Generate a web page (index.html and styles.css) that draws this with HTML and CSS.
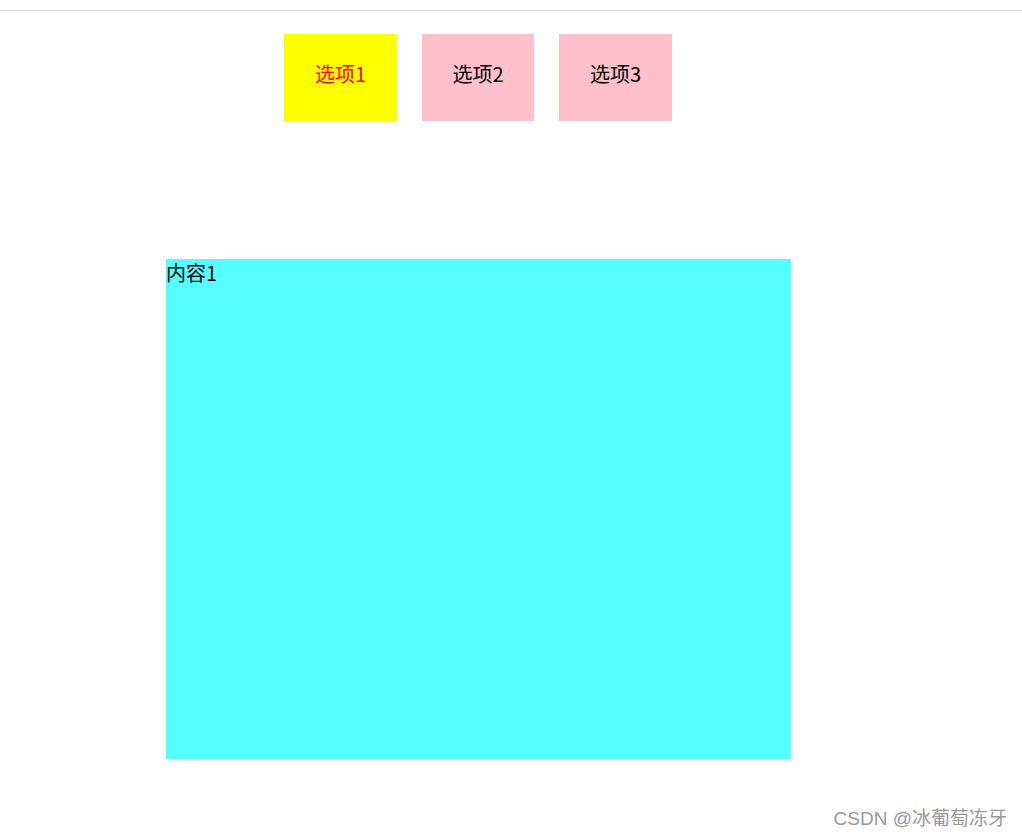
FILE: index.html
```html
<!DOCTYPE html>
<html lang="zh">
<head>
  <meta charset="UTF-8" />
  <meta name="viewport" content="width=device-width, initial-scale=1.0"/>
  <title>选项卡</title>
  <link rel="stylesheet" href="styles.css">
</head>
<body>
  <div class="topline"></div>

  <div class="box">
    <ul class="tabs">
      <li class="active">选项1</li>
      <li class="mid">选项2</li>
      <li>选项3</li>
    </ul>
    <div class="content">内容1</div>
  </div>

  <div class="mark">CSDN @冰葡萄冻牙</div>
</body>
</html>
```

FILE: styles.css
```css
body {
  margin: 0;
  font-family: "Microsoft YaHei", "Noto Sans CJK SC", sans-serif;
  background: #fff;
}
.topline {
  margin-top: 10px;
  height: 1px;
  background: #dcdcdc;
}
.box {
  width: 625px;
  margin-left: 166px;
}
.tabs {
  list-style: none;
  display: flex;
  gap: 25px;
  margin: 23px 0 0;
  padding: 0 0 0 118px;
}
.tabs li {
  width: 113px;
  height: 87px;
  line-height: 79px;
  text-align: center;
  font-size: 20px;
  background: pink;
  color: #000;
  cursor: pointer;
}
.tabs li.mid {
  width: 112px;
}
.tabs li.active {
  background: yellow;
  color: red;
}
.content {
  margin-top: 138px;
  height: 500px;
  background: #55ffff;
  font-size: 20px;
  line-height: 28px;
}
.mark {
  position: absolute;
  right: 15px;
  top: 803px;
  font-family: "Liberation Sans", "Noto Sans CJK SC", sans-serif;
  font-size: 19px;
  color: #999;
}
```
